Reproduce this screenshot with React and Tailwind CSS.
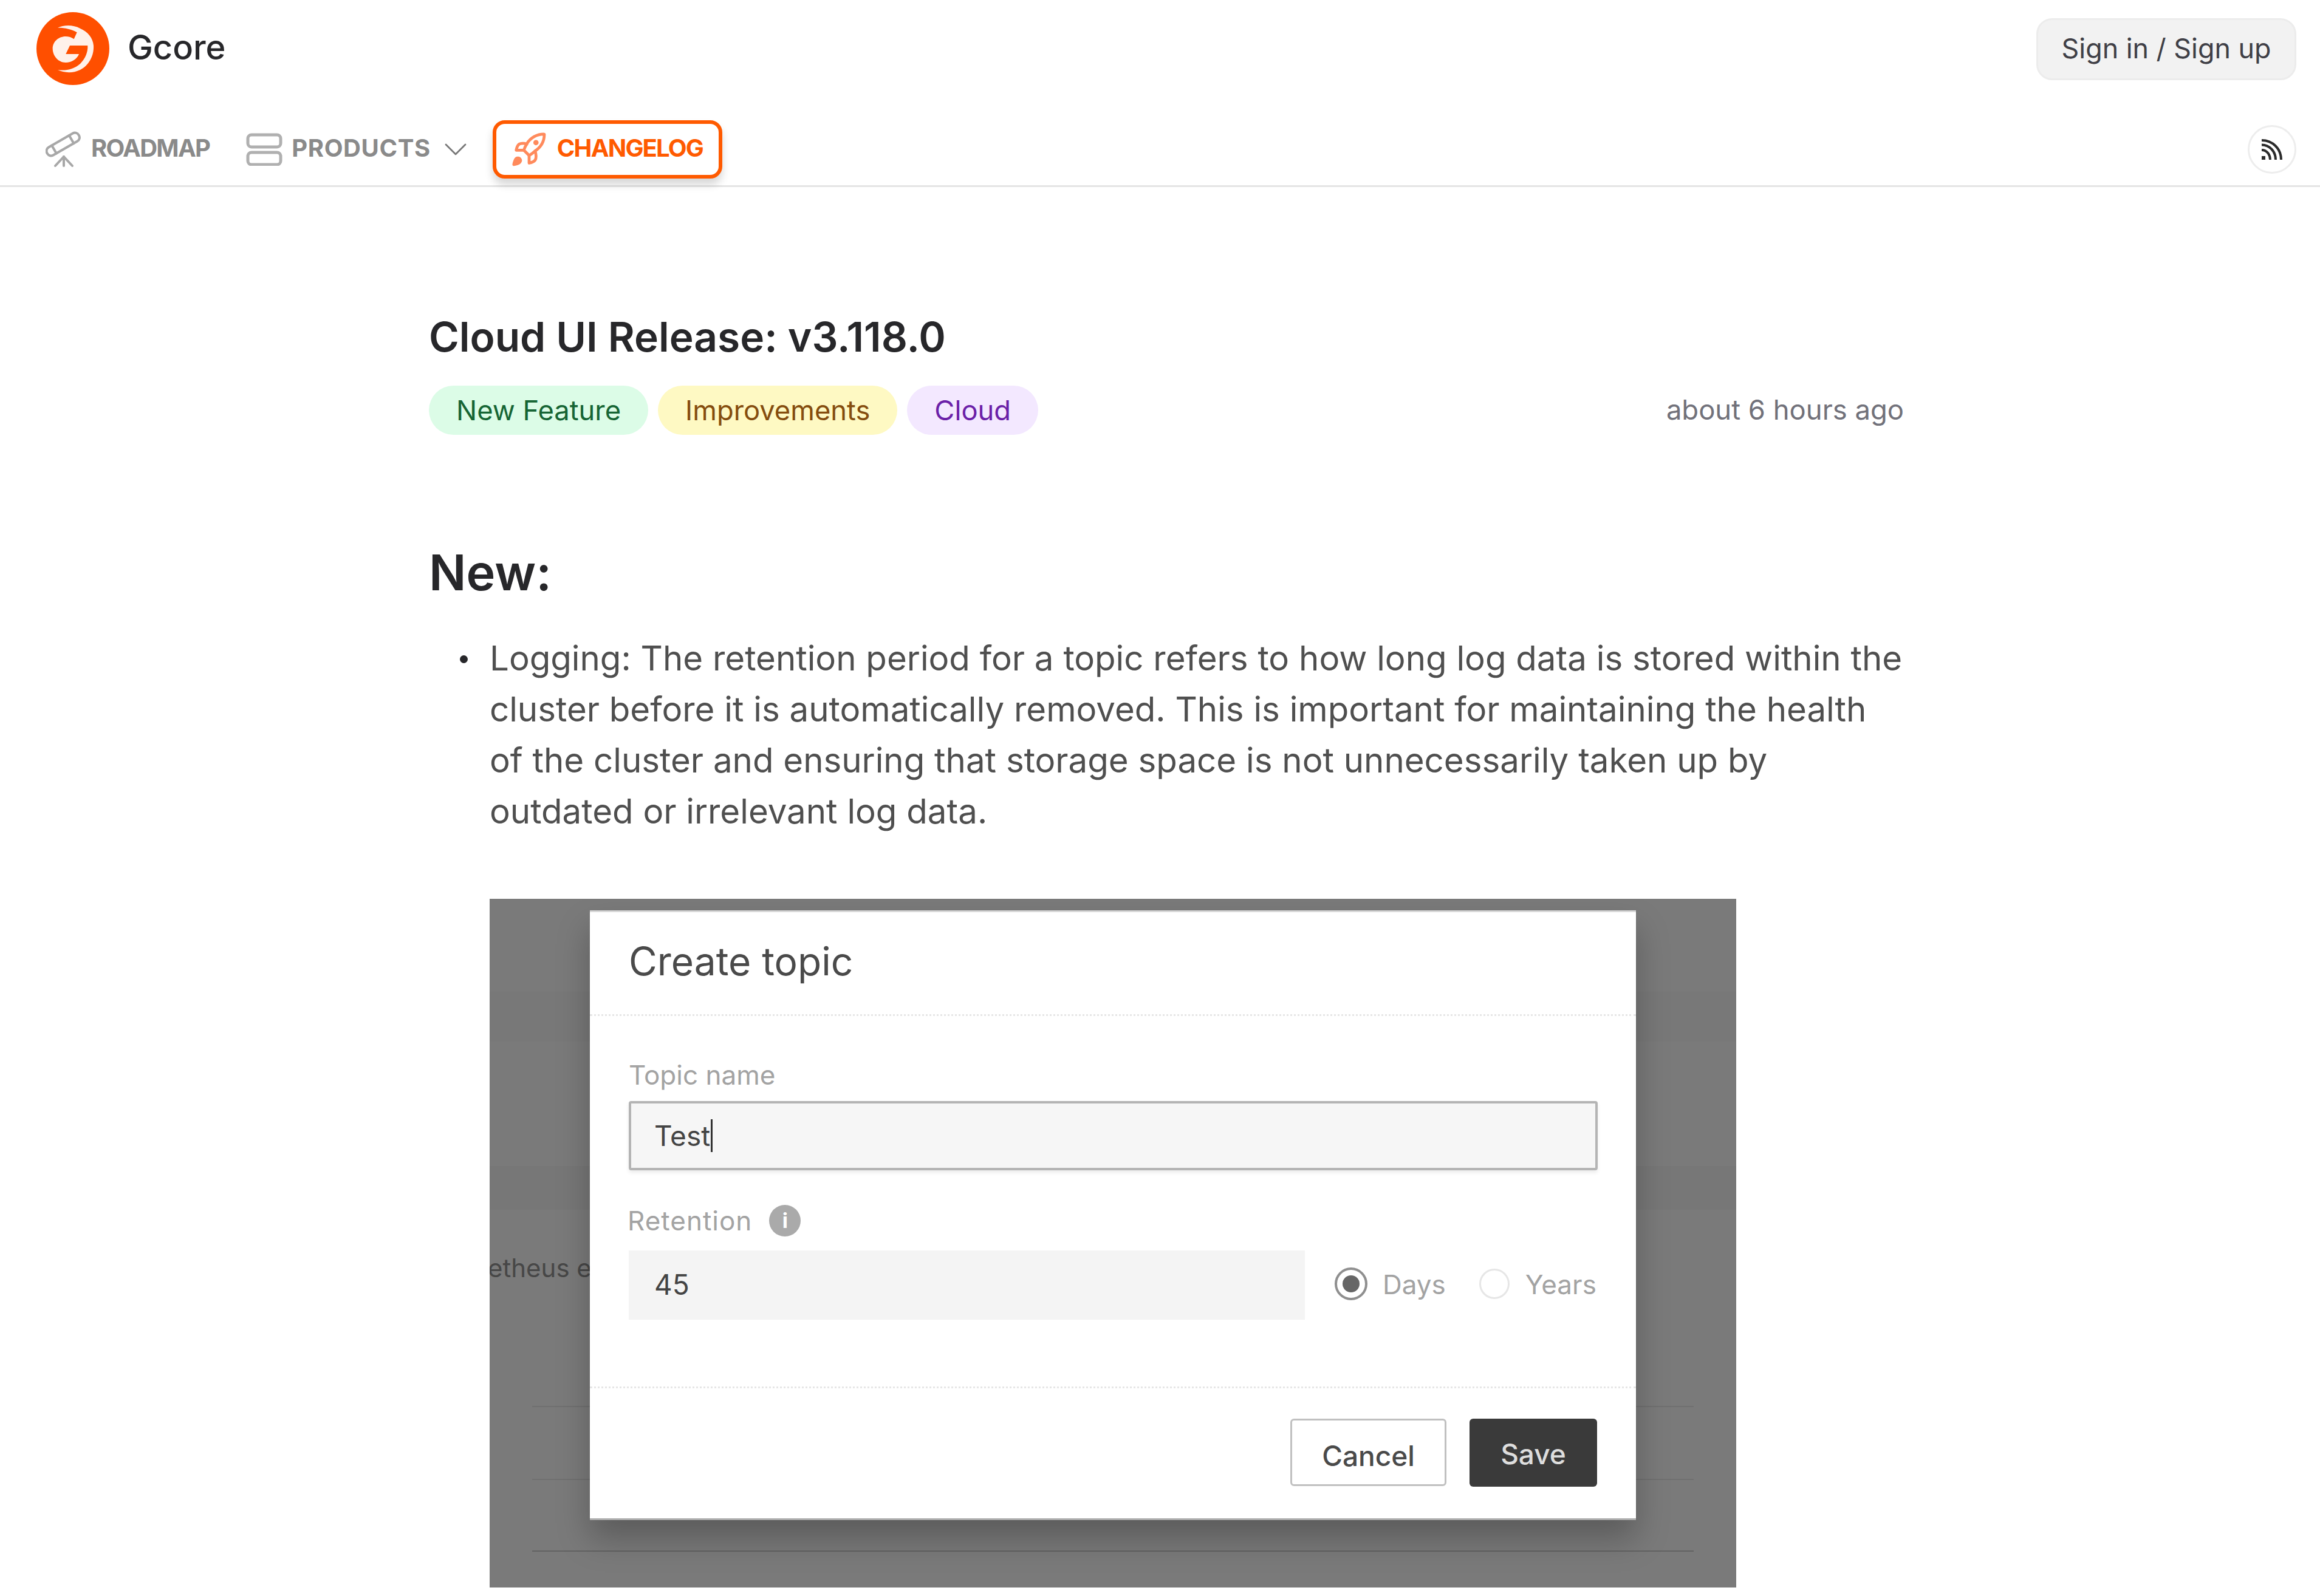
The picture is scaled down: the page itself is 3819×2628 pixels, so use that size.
import React from 'react';
import { ChevronDown } from 'lucide-react';

const TAGS = [
  { label: 'New Feature', className: 'bg-[#dcfce7] text-[#166534]' },
  { label: 'Improvements', className: 'bg-[#fef9c3] text-[#854d0e]' },
  { label: 'Cloud', className: 'bg-[#f3e8ff] text-[#6b21a8]' },
];

function GcoreLogo() {
  return (
    <svg width="120" height="120" viewBox="0 0 120 120" className="shrink-0">
      <circle cx="60" cy="60" r="60" fill="#ff4f00" />
      <path
        d="M35 25.700 C44 21 60 20 71.700 26.700 C84 32 93 42 94 55 C95 72 86 88 72 95 C60 101 45 100 35 95 C48 97 62 94 72 85 C80 77 85 66 84.300 55 L55 55 L48.300 69 L70 69 C67 77 58 83 48 83 C36 83 26.700 72 26.700 60 C26.700 49 36 40 48 40 C53 40 58 41.500 61.700 44.300 L66.700 33.300 C58 28 46 25.500 35 25.700 Z"
        fill="#fff1ea"
      />
    </svg>
  );
}

function TelescopeIcon() {
  return (
    <svg width="60" height="60" viewBox="0 0 60 60" fill="none" stroke="#a8a8a8" strokeWidth="4" strokeLinecap="round" className="shrink-0">
      <g transform="rotate(-30 29 22)">
        <rect x="-1" y="14" width="60" height="15" rx="7" />
        <path d="M12 14v15" />
        <path d="M45 14v15" />
      </g>
      <path d="M30 42 16 57" />
      <path d="M30 42v15" />
      <path d="M30 42 44 57" />
    </svg>
  );
}

function ProductsIcon() {
  return (
    <svg width="60" height="54" viewBox="0 0 60 54" fill="none" stroke="#b0b0b0" strokeWidth="5" className="shrink-0">
      <rect x="3" y="3" width="54" height="20" rx="6" />
      <rect x="3" y="32" width="54" height="20" rx="6" />
    </svg>
  );
}

function RocketIcon() {
  return (
    <svg width="60" height="60" viewBox="0 0 24 24" fill="none" stroke="#ff8a5c" strokeWidth="1.9" strokeLinejoin="round" strokeLinecap="round" className="shrink-0">
      <path d="M3.500 18c-1 .9-1.600 4-1.600 4s3-.4 4-1.600c.6-.7.5-1.600 0-2.200-.6-.6-1.700-.7-2.400-.2z" fill="#ff8a5c" />
      <path d="m12 16-3.500-3.500a22 22 0 0 1 2-4.200A12.900 12.900 0 0 1 22 2c0 2.700-.8 7.500-6 11a22 22 0 0 1-4 3z" />
      <path d="M8.500 12.500H3.500s.6-3 2-4c1.600-1.100 5 0 5 0" />
      <path d="M12 16v5s3-.6 4-2c1.100-1.600 0-6 0-6" />
      <circle cx="16.500" cy="7.500" r="0.8" fill="#ff8a5c" />
    </svg>
  );
}

function RssIcon() {
  return (
    <svg width="34" height="34" viewBox="0 0 34 34" fill="none" stroke="#2b2b2b" strokeWidth="4">
      <rect x="0" y="28" width="6" height="6" fill="#2b2b2b" stroke="none" />
      <path d="M0 18c8 0 14 7 14 16" />
      <path d="M0 9.500c13 0 23 11 23 24.500" />
      <path d="M0 2c18 0 32 14 32 32" />
    </svg>
  );
}

function TopNav() {
  return (
    <header className="border-b-[3px] border-[#e5e5e5] h-[308px] px-[39px] pt-[20px]">
      <div className="flex items-start justify-between h-[152px]">
        <div className="flex items-center gap-[30px] ml-[21px] h-[120px]">
          <GcoreLogo />
          <span className="text-[56px] font-medium text-[#27272a] -mt-[4px]">Gcore</span>
        </div>
        <button className="mt-[10px] h-[102px] w-[428px] rounded-[26px] border-[3px] border-[#ececec] bg-[#f2f2f2] pb-[1px] text-[44.800px] text-[#3f3f46]">
          Sign in / Sign up
        </button>
      </div>
      <div className="flex items-center justify-between mt-[26px]">
        <nav className="flex items-center text-[40px] font-bold text-[#8a8a8a]">
          <div className="flex items-center gap-[15px] ml-[36px]">
            <TelescopeIcon />
            <span className="pb-[4px] tracking-[-1.700px]">ROADMAP</span>
          </div>
          <div className="flex items-center gap-[15px] ml-[60px]">
            <ProductsIcon />
            <span className="pb-[4px] tracking-[0.600px]">PRODUCTS</span>
            <ChevronDown size={64} strokeWidth={1} color="#777777" className="-ml-[6px]" />
          </div>
          <div className="flex items-center gap-[16px] ml-[29px] h-[96px] w-[378px] pl-[24px] rounded-[20px] border-[6px] border-[#ff5a00] bg-white text-[#ff5a00] shadow-[0_10px_14px_rgba(0,0,0,0.16)]">
            <RocketIcon />
            <span className="pb-[4px] tracking-[-1.800px]">CHANGELOG</span>
          </div>
        </nav>
        <div className="flex items-center justify-center h-[80px] w-[80px] rounded-full border-[3px] border-[#ededed] bg-white">
          <RssIcon />
        </div>
      </div>
    </header>
  );
}

// the screenshot embedded in the changelog post
function CreateTopicShot() {
  return (
    <div className="relative mt-[102px] h-[1134px] w-[2052px] overflow-hidden bg-[#7a7a7a] pl-[165px] pt-[19px]">
      <div className="absolute left-0 right-0 top-[153px] h-[82px] bg-[#787878]" />
      <div className="absolute left-0 right-0 top-[440px] h-[72px] bg-[#777777]" />
      <span className="absolute left-[-3px] top-[566px] text-[42px] text-[#474747]">etheus e</span>
      <div className="absolute left-[70px] right-[70px] top-[835px] h-[2px] bg-[#707070]" />
      <div className="absolute left-[70px] right-[70px] top-[955px] h-[2px] bg-[#707070]" />
      <div className="absolute left-[70px] right-[70px] top-[1073px] h-[2px] bg-[#636363]" />

      <div className="relative w-[1722px] h-[1004px] bg-white border-t-[3px] border-b-[3px] border-t-[#d8d8d8] border-b-[#b0b0b0] shadow-[0_30px_50px_rgba(0,0,0,0.25)] flex flex-col">
        <div className="h-[171px] border-b-[3px] border-dotted border-[#e6e6e6] px-[64px] pt-[39px]">
          <h3 className="text-[64px] leading-[84px] text-[#4a4a4a]">Create topic</h3>
        </div>

        <div className="h-[613px] border-b-[3px] border-dotted border-[#e6e6e6] px-[64px] pt-[70px]">
          <label className="block text-[44px] leading-[54px] text-[#a3a3a3]">Topic name</label>
          <div className="mt-[16px] flex items-center h-[114px] w-[1595px] rounded-[4px] border-[4px] border-[#b4b4b4] bg-[#f6f6f6] pl-[38px] text-[46px] text-[#444444] shadow-[0_4px_6px_rgba(0,0,0,0.08)]">
            Test
            <span className="ml-[1px] h-[54px] w-[3px] bg-[#333333]" />
          </div>

          <div className="mt-[56px] flex items-center gap-[28px] -ml-[2px]">
            <span className="text-[44px] leading-[54px] tracking-[1px] text-[#a3a3a3]">Retention</span>
            <span className="flex h-[52px] w-[52px] items-center justify-center rounded-full bg-[#aaaaaa] text-[34px] font-bold text-white">i</span>
          </div>

          <div className="mt-[22px] flex items-center">
            <div className="flex items-center h-[114px] w-[1113px] bg-[#f4f4f4] pl-[42px] pb-[2px] text-[46px] text-[#444444]">45</div>
            <span className="ml-[49px] -mt-[4px] flex h-[54px] w-[54px] items-center justify-center rounded-full border-[4px] border-[#8f8f8f]">
              <span className="h-[28px] w-[28px] rounded-full bg-[#666666]" />
            </span>
            <span className="ml-[25px] -mt-[3px] text-[44px] text-[#a3a3a3]">Days</span>
            <span className="ml-[55px] -mt-[4px] h-[50px] w-[50px] rounded-full border-[3px] border-[#e6e6e6]" />
            <span className="ml-[26px] -mt-[3px] text-[44px] text-[#a3a3a3]">Years</span>
          </div>
        </div>

        <div className="flex justify-end gap-[38px] pr-[64px] pt-[50px]">
          <button className="h-[111px] w-[257px] rounded-[6px] border-[3px] border-[#c0c0c0] bg-white pt-[10px] text-[46px] font-medium text-[#4a4a4a]">Cancel</button>
          <button className="h-[112px] w-[210px] rounded-[6px] bg-[#3a3a3a] pt-[4px] text-[46px] font-medium text-[#dddddd]">Save</button>
        </div>
      </div>
    </div>
  );
}

export default function App() {
  return (
    <div className="min-h-[2628px] bg-white font-['Inter',sans-serif] overflow-hidden">
      <TopNav />
      <main className="ml-[706px] w-[2428px] pt-[205px]">
        <h1 className="text-[67.600px] leading-[84px] font-semibold text-[#27272a]">Cloud UI Release: v3.118.0</h1>

        <div className="mt-[38px] flex items-center justify-between">
          <div className="flex gap-[16px]">
            {TAGS.map((tag) => (
              <span key={tag.label} className={`flex items-center h-[81px] px-[45px] rounded-full text-[45.300px] ${tag.className}`}>
                {tag.label}
              </span>
            ))}
          </div>
          <span className="text-[45.400px] text-[#71717a]">about 6 hours ago</span>
        </div>

        <h2 className="mt-[177px] text-[81px] leading-[100px] font-semibold text-[#27272a]">New:</h2>

        <ul className="mt-[49px] pl-[100px] text-[56.400px] leading-[84px] text-[#4f4f4f]">
          <li className="relative">
            <span className="absolute left-[-49px] top-[37px] h-[13px] w-[13px] rounded-full bg-[#27272a]" />
            Logging: The retention period for a topic refers to how long log data is stored within the cluster before it is automatically removed. This is important for maintaining the health of the cluster and ensuring that storage space is not unnecessarily taken up by outdated or irrelevant log data.
            <CreateTopicShot />
          </li>
        </ul>
      </main>
    </div>
  );
}
